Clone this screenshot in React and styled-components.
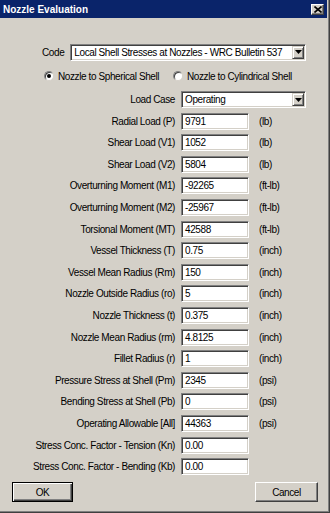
import React from "react";
import styled, { createGlobalStyle } from "styled-components";

const GlobalStyle = createGlobalStyle`
  html, body {
    margin: 0;
    padding: 0;
    background: #d4d0c8;
  }
  body {
    font-family: "Liberation Sans", Arial, sans-serif;
    font-size: 10px;
    letter-spacing: -0.4px;
    color: #000;
  }
`;

const rows = [
  { label: "Radial Load (P)", value: "9791", unit: "(lb)" },
  { label: "Shear Load (V1)", value: "1052", unit: "(lb)" },
  { label: "Shear Load (V2)", value: "5804", unit: "(lb)" },
  { label: "Overturning Moment (M1)", value: "-92265", unit: "(ft-lb)" },
  { label: "Overturning Moment (M2)", value: "-25967", unit: "(ft-lb)" },
  { label: "Torsional Moment (MT)", value: "42588", unit: "(ft-lb)" },
  { label: "Vessel Thickness (T)", value: "0.75", unit: "(inch)" },
  { label: "Vessel Mean Radius (Rm)", value: "150", unit: "(inch)" },
  { label: "Nozzle Outside Radius (ro)", value: "5", unit: "(inch)" },
  { label: "Nozzle Thickness (t)", value: "0.375", unit: "(inch)" },
  { label: "Nozzle Mean Radius (rm)", value: "4.8125", unit: "(inch)" },
  { label: "Fillet Radius (r)", value: "1", unit: "(inch)" },
  { label: "Pressure Stress at Shell (Pm)", value: "2345", unit: "(psi)" },
  { label: "Bending Stress at Shell (Pb)", value: "0", unit: "(psi)" },
  { label: "Operating Allowable [All]", value: "44363", unit: "(psi)" },
  { label: "Stress Conc. Factor - Tension (Kn)", value: "0.00", unit: "" },
  { label: "Stress Conc. Factor - Bending (Kb)", value: "0.00", unit: "" },
];

const DropArrow = () => (
  <svg width="7" height="4" viewBox="0 0 7 4">
    <path d="M0 0h7L3.5 4z" fill="#000" />
  </svg>
);

const CloseIcon = () => (
  <svg width="8" height="7" viewBox="0 0 8 7">
    <path d="M0.5 0.5l7 6M7.5 0.5l-7 6" stroke="#000" strokeWidth="1.6" />
  </svg>
);

const Combo = ({ value, width }) => (
  <ComboBox $width={width}>
    <ComboText>{value}</ComboText>
    <ComboButton>
      <DropArrow />
    </ComboButton>
  </ComboBox>
);

const App = () => {
  return (
    <>
      <GlobalStyle />
      <Window>
        <TitleBar>
          <Title>Nozzle Evaluation</Title>
          <CloseButton>
            <CloseIcon />
          </CloseButton>
        </TitleBar>

        <CodeRow>
          <CodeLabel>Code</CodeLabel>
          <Combo value="Local Shell Stresses at Nozzles - WRC Bulletin 537" width={236} />
        </CodeRow>

        <RadioRow>
          <RadioOption>
            <RadioDot $checked />
            Nozzle to Spherical Shell
          </RadioOption>
          <RadioOption>
            <RadioDot />
            Nozzle to Cylindrical Shell
          </RadioOption>
        </RadioRow>

        <FormGrid>
          <Label>Load Case</Label>
          <ComboCell>
            <Combo value="Operating" width={125} />
          </ComboCell>
          {rows.map((r) => (
            <React.Fragment key={r.label}>
              <Label>{r.label}</Label>
              <TextField>{r.value}</TextField>
              <Unit>{r.unit}</Unit>
            </React.Fragment>
          ))}
        </FormGrid>

        <ButtonRow>
          <Button $default>OK</Button>
          <Button>Cancel</Button>
        </ButtonRow>
      </Window>
    </>
  );
};

export default App;

const Window = styled.div`
  box-sizing: border-box;
  width: 330px;
  height: 513px;
  background: #d4d0c8;
  border-right: 1px solid #404040;
  border-bottom: 1px solid #404040;
  box-shadow: inset -1px -1px 0 #808080;
  padding: 0 2px 2px 0;
  overflow: hidden;
`;

const TitleBar = styled.div`
  height: 18px;
  background: #0a246a;
  display: flex;
  align-items: center;
  justify-content: space-between;
  padding: 0 3px 0 3px;
`;

const Title = styled.span`
  font-weight: bold;
  font-size: 10px;
  letter-spacing: 0;
  color: #fff;
`;

const CloseButton = styled.div`
  box-sizing: border-box;
  width: 13px;
  height: 11px;
  background: #d4d0c8;
  border-top: 1px solid #fff;
  border-left: 1px solid #fff;
  border-right: 1px solid #404040;
  border-bottom: 1px solid #404040;
  box-shadow: inset -1px -1px 0 #808080;
  display: flex;
  align-items: center;
  justify-content: center;
`;

const CodeRow = styled.div`
  display: flex;
  align-items: center;
  gap: 6px;
  margin-top: 25px;
  padding-left: 42px;
  height: 18px;
`;

const CodeLabel = styled.span``;

const ComboBox = styled.div`
  box-sizing: border-box;
  width: ${(p) => p.$width}px;
  height: 17px;
  background: #fff;
  border-top: 1px solid #808080;
  border-left: 1px solid #808080;
  border-right: 1px solid #fff;
  border-bottom: 1px solid #fff;
  box-shadow: inset 1px 1px 0 #404040, inset -1px -1px 0 #d4d0c8;
  display: flex;
  align-items: stretch;
  padding: 1px;
  flex-shrink: 0;
`;

const ComboText = styled.span`
  flex: 1;
  padding-left: 2px;
  display: flex;
  align-items: center;
  white-space: nowrap;
  overflow: hidden;
`;

const ComboButton = styled.span`
  box-sizing: border-box;
  width: 12px;
  background: #d4d0c8;
  border-top: 1px solid #d4d0c8;
  border-left: 1px solid #d4d0c8;
  border-right: 1px solid #404040;
  border-bottom: 1px solid #404040;
  box-shadow: inset 1px 1px 0 #fff, inset -1px -1px 0 #808080;
  display: flex;
  align-items: center;
  justify-content: center;
`;

const RadioRow = styled.div`
  display: grid;
  grid-template-columns: 129px auto;
  align-items: center;
  margin-top: 8px;
  padding-left: 44px;
  height: 14px;
`;

const RadioOption = styled.label`
  display: flex;
  align-items: center;
  gap: 4px;
  white-space: nowrap;
`;

const RadioDot = styled.span`
  box-sizing: border-box;
  position: relative;
  flex-shrink: 0;
  width: 10px;
  height: 10px;
  border-radius: 50%;
  background: #fff;
  border: 1px solid;
  border-color: #808080 #d4d0c8 #d4d0c8 #808080;
  box-shadow: inset 1px 1px 0 #404040;

  &::after {
    content: "";
    display: ${(p) => (p.$checked ? "block" : "none")};
    position: absolute;
    left: 2px;
    top: 2px;
    width: 4px;
    height: 4px;
    border-radius: 50%;
    background: #000;
  }
`;

const FormGrid = styled.div`
  display: grid;
  grid-template-columns: 181px 68px auto;
  grid-auto-rows: 17px;
  row-gap: 4.6px;
  align-items: center;
  margin-top: 8px;
`;

const Label = styled.span`
  text-align: right;
  padding-right: 6px;
  white-space: nowrap;
`;

const ComboCell = styled.div`
  grid-column: 2 / span 2;
`;

const TextField = styled.div`
  box-sizing: border-box;
  height: 17px;
  background: #fff;
  border-top: 1px solid #808080;
  border-left: 1px solid #808080;
  border-right: 1px solid #fff;
  border-bottom: 1px solid #fff;
  box-shadow: inset 1px 1px 0 #404040, inset -1px -1px 0 #d4d0c8;
  padding-left: 3px;
  display: flex;
  align-items: center;
`;

const Unit = styled.span`
  padding-left: 10px;
`;

const ButtonRow = styled.div`
  display: flex;
  justify-content: space-between;
  margin-top: 7px;
  padding: 0 9px 0 12px;
`;

const Button = styled.div`
  box-sizing: border-box;
  width: ${(p) => (p.$default ? 61 : 63)}px;
  height: 20px;
  background: #d4d0c8;
  display: flex;
  align-items: center;
  justify-content: center;
  border: 1px solid;
  border-color: ${(p) =>
    p.$default ? "#000" : "#fff #404040 #404040 #fff"};
  box-shadow: ${(p) =>
    p.$default
      ? "inset 1px 1px 0 #fff, inset -1px -1px 0 #404040, inset -2px -2px 0 #808080"
      : "inset -1px -1px 0 #808080"};
`;
